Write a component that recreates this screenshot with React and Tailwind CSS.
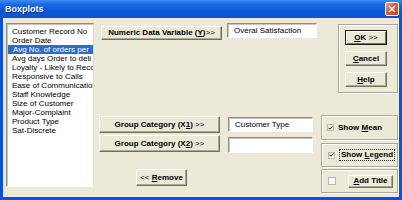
import React from "react";

const F = { fontFamily: '"Liberation Sans", Arial, sans-serif' };

const items = [
  "Customer Record No",
  "Order Date",
  "Avg No. of orders per",
  "Avg days Order to deli",
  "Loyalty - Likely to Reco",
  "Responsive to Calls",
  "Ease of Communication",
  "Staff Knowledge",
  "Size of Customer",
  "Major-Complaint",
  "Product Type",
  "Sat-Discrete",
];

function Btn({ className = "", children, def = false }) {
  return (
    <div
      className={
        "flex items-center justify-center bg-[#ece9d8] text-[8px] font-bold text-black leading-none whitespace-nowrap " +
        (def
          ? "border border-[#1a1a1a] shadow-[inset_1px_1px_0_#fff,inset_-1px_-1px_0_#716f64]"
          : "border border-t-white border-l-white border-b-[#716f64] border-r-[#716f64] shadow-[inset_-1px_-1px_0_#aca899]") +
        " " +
        className
      }
    >
      {children}
    </div>
  );
}

function TextBox({ className = "", children }) {
  return (
    <div
      className={
        "bg-white border border-t-[#8e8d86] border-l-[#8e8d86] border-b-white border-r-white shadow-[inset_1px_1px_0_#c8c6ba] text-[8px] leading-none text-black pl-[6px] pt-[3px] whitespace-nowrap overflow-hidden " +
        className
      }
    >
      {children}
    </div>
  );
}

function Check({ checked }) {
  return (
    <div className="w-[7px] h-[7px] bg-white border border-[#b9b7aa] flex items-center justify-center">
      {checked && (
        <svg width="6" height="6" viewBox="0 0 6 6">
          <path d="M0.8 2.8 L2.3 4.3 L5.2 1.2" stroke="#21a121" strokeWidth="1.3" fill="none" />
          <path d="M0.8 2.8 L2.3 4.3 L5.2 1.2" stroke="#1a1a1a" strokeWidth="0.9" fill="none" />
        </svg>
      )}
    </div>
  );
}

const frame =
  "border border-[#aca899] shadow-[inset_1px_1px_0_#fff,1px_1px_0_#fff]";

export default function App() {
  return (
    <div style={F} className="w-[402px] h-[200px] bg-[#0a52dc] flex flex-col overflow-hidden select-none">
      {/* title bar */}
      <div className="h-[18px] shrink-0 flex items-center justify-between pl-[5px] pr-[3px] bg-[linear-gradient(to_bottom,#3f8cf3_0%,#1a6ae8_25%,#0a5ad8_60%,#0b53d0_100%)]">
        <span className="text-white font-bold text-[9px] leading-none [text-shadow:1px_1px_0_#0b2e8a]">Boxplots</span>
        <div className="w-[14px] h-[14px] rounded-[2px] border border-white bg-[linear-gradient(135deg,#f0a080_0%,#e0592f_45%,#c2401a_100%)] flex items-center justify-center">
          <svg width="8" height="8" viewBox="0 0 8 8">
            <path d="M1 1 L7 7 M7 1 L1 7" stroke="#fff" strokeWidth="1.6" />
          </svg>
        </div>
      </div>
      {/* body */}
      <div className="flex-1 mx-[3px] mb-[3px] bg-[#ece9d8] flex pl-[3px] pt-[5px]">
        {/* list */}
        <div className="w-[88px] h-[164px] bg-white border border-t-[#8e8d86] border-l-[#8e8d86] border-b-white border-r-[#dcdad0] shadow-[inset_1px_1px_0_#c8c6ba] pt-[3px] overflow-hidden">
          {items.map((t, i) => (
            <div
              key={t}
              className={
                "h-[9px] text-[8px] leading-[9px] pl-[5px] whitespace-nowrap overflow-hidden " +
                (i === 2 ? "bg-[#316ac5] text-white ml-[1px] pl-[4px]" : "text-black")
              }
            >
              {t}
            </div>
          ))}
        </div>
        {/* middle */}
        <div className="ml-[5px] w-[219px] flex flex-col">
          <div className="flex items-start">
            <Btn className="ml-[2px] mt-[3px] w-[121px] h-[14px]">
              Numeric Data Variable (<span className="underline">Y</span>)<span className="font-normal">&gt;&gt;</span>
            </Btn>
            <TextBox className="ml-[5px] w-[90px] h-[15px]">Overal Satisfaction</TextBox>
          </div>
          <div className="flex items-start mt-[76px]">
            <Btn className="w-[121px] h-[17px]">
              Group Category (X<span className="underline">1</span>)<span className="font-normal">&nbsp;&gt;&gt;</span>
            </Btn>
            <TextBox className="ml-[8px] mt-[1px] w-[85px] h-[15px]">Customer Type</TextBox>
          </div>
          <div className="flex items-start mt-[2px]">
            <Btn className="w-[121px] h-[17px]">
              Group Category (X<span className="underline">2</span>)<span className="font-normal">&nbsp;&gt;&gt;</span>
            </Btn>
            <TextBox className="ml-[8px] mt-[2px] w-[85px] h-[16px]"></TextBox>
          </div>
          <Btn className="ml-[37px] mt-[16px] w-[51px] h-[17px]">
            <span className="font-normal">&lt;&lt;&nbsp;</span>
            <span className="underline">R</span>emove
          </Btn>
        </div>
        {/* right */}
        <div className="ml-[3px] w-[77px] flex flex-col">
          <div className={"ml-[17px] mt-[1px] w-[60px] h-[69px] flex flex-col items-start pl-[6px] pt-[5px] gap-[6px] " + frame}>
            <Btn def className="w-[42px] h-[15px]">
              <span className="underline">O</span>K&nbsp;<span className="font-normal">&gt;&gt;</span>
            </Btn>
            <Btn className="w-[42px] h-[15px]">
              <span className="underline">C</span>ancel
            </Btn>
            <Btn className="w-[42px] h-[15px]">
              <span className="underline">H</span>elp
            </Btn>
          </div>
          <div className={"mt-[22px] h-[25px] flex items-center pl-[5px] gap-[4px] " + frame}>
            <Check checked />
            <span className="text-[8px] font-bold leading-none">
              Show <span className="underline">M</span>ean
            </span>
          </div>
          <div className={"mt-[3px] h-[24px] flex items-center pl-[6px] gap-[4px] " + frame}>
            <Check checked />
            <span className="text-[8px] font-bold leading-none border border-dotted border-[#333] px-[1px] py-[1px]">
              Show <span className="underline">L</span>egend
            </span>
          </div>
          <div className={"mt-[2px] h-[24px] flex items-center pl-[6px] " + frame}>
            <div className="w-[8px] h-[8px] bg-white border border-[#b9b7aa]" />
            <Btn className="ml-[12px] w-[45px] h-[13px]">
              <span className="underline">A</span>dd Title
            </Btn>
          </div>
        </div>
      </div>
    </div>
  );
}
